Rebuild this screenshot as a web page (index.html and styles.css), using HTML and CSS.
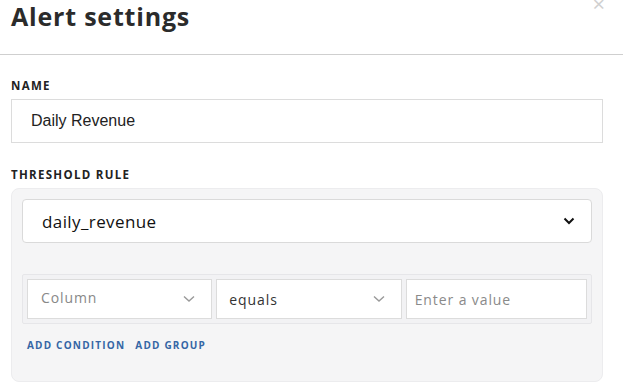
FILE: index.html
```html
<!DOCTYPE html>
<html lang="en">
<head>
  <meta charset="UTF-8">
  <title>Alert settings</title>
  <link rel="stylesheet" href="styles.css">
</head>
<body>
  <div class="modal">
    <div class="modal-header">
      <h1>Alert settings</h1>
      <span class="close">&times;</span>
    </div>

    <div class="modal-body">
      <label class="field-label" for="name">Name</label>
      <input class="text-input" id="name" type="text" value="Daily Revenue">

      <div class="field-label">Threshold rule</div>
      <div class="rule-box">
        <div class="metric-select">
          <span>daily_revenue</span>
          <svg width="12" height="8" viewBox="0 0 12 8"><path d="M1.5 1.5 L6 6 L10.5 1.5" fill="none" stroke="#111" stroke-width="2"/></svg>
        </div>

        <div class="condition-row">
          <div class="cond-select placeholder">
            <span>Column</span>
            <svg width="12" height="8" viewBox="0 0 12 8"><path d="M1 1.5 L6 6 L11 1.5" fill="none" stroke="#999" stroke-width="1.4"/></svg>
          </div>
          <div class="cond-select">
            <span>equals</span>
            <svg width="12" height="8" viewBox="0 0 12 8"><path d="M1 1.5 L6 6 L11 1.5" fill="none" stroke="#999" stroke-width="1.4"/></svg>
          </div>
          <div class="cond-input">Enter a value</div>
        </div>

        <div class="rule-actions">
          <a href="#">Add condition</a>
          <a href="#">Add group</a>
        </div>
      </div>
    </div>
  </div>
</body>
</html>
```

FILE: styles.css
```css
body {
  margin: 0;
  font-family: "Open Sans", sans-serif;
  color: #222;
  background: #fff;
}

.modal {
  position: relative;
  width: 623px;
  height: 391px;
  overflow: hidden;
}

.modal-header {
  height: 54px;
  border-bottom: 1px solid #cfcfcf;
  padding-left: 11px;
}

.modal-header h1 {
  margin: 0;
  padding-top: 1px;
  font-size: 25px;
  font-weight: 700;
  line-height: 30px;
  color: #2b2b2b;
  letter-spacing: 0.8px;
}

.close {
  position: absolute;
  top: -12px;
  right: 18px;
  font-size: 22px;
  color: #d0d0d0;
}

.modal-body {
  padding: 24px 20px 0 11px;
}

.field-label {
  display: block;
  font-size: 11.5px;
  font-weight: 700;
  letter-spacing: 1.3px;
  text-transform: uppercase;
  color: #222;
  line-height: 14px;
  margin-bottom: 6px;
}

.text-input {
  display: block;
  box-sizing: border-box;
  width: 592px;
  height: 44px;
  margin: 0 0 25px;
  padding: 0 19px;
  border: 1px solid #dcdcdc;
  border-radius: 0;
  font-family: "Liberation Sans", Arial, sans-serif;
  font-size: 16px;
  color: #222;
}

.rule-box {
  box-sizing: border-box;
  width: 592px;
  height: 194px;
  padding: 10px 10px 0;
  background: #f5f5f6;
  border: 1px solid #ececee;
  border-radius: 8px;
}

.metric-select {
  box-sizing: border-box;
  height: 44px;
  display: flex;
  align-items: center;
  justify-content: space-between;
  padding: 0 16px 0 19px;
  background: #fff;
  border: 1px solid #dadada;
  border-radius: 4px;
  font-size: 17px;
  letter-spacing: 0.4px;
  color: #111;
}

.condition-row {
  box-sizing: border-box;
  display: flex;
  gap: 4px;
  height: 50px;
  margin-top: 31px;
  padding: 4px;
  background: #f2f2f4;
  border: 1px solid #e6e6e9;
  border-radius: 2px;
}

.cond-select,
.cond-input {
  box-sizing: border-box;
  flex: 1 1 0;
  min-width: 0;
  display: flex;
  align-items: center;
  justify-content: space-between;
  padding: 0 16px 0 12px;
  background: #fff;
  border: 1px solid #dcdcdc;
  font-size: 14px;
  letter-spacing: 0.9px;
  color: #333;
}

.cond-select.placeholder span {
  color: #888;
  margin-left: 1px;
  margin-top: -4px;
}

.cond-input {
  padding-left: 8px;
  color: #8a8a8a;
}

.rule-actions {
  display: flex;
  gap: 10px;
  margin-top: 14px;
  padding-left: 5px;
}

.rule-actions a {
  font-size: 10px;
  font-weight: 700;
  letter-spacing: 1.2px;
  text-transform: uppercase;
  text-decoration: none;
  color: #3566a5;
}
```
